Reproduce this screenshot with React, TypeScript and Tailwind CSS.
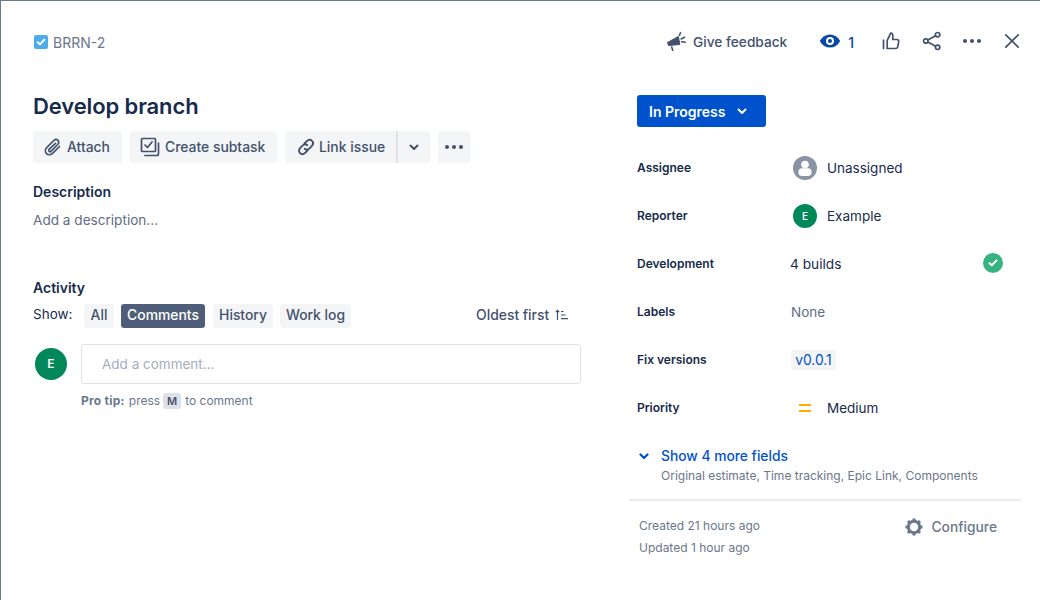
const F = { fontFamily: "Inter, 'Liberation Sans', sans-serif" };

function Check() {
  return (
    <svg width="16" height="16" viewBox="0 0 16 16" className="shrink-0">
      <rect x="1" y="1" width="14" height="14" rx="2" fill="#4bade8" />
      <path d="M4.7 8.2 7 10.4 11.3 5.8" fill="none" stroke="#fff" strokeWidth="2" strokeLinecap="round" strokeLinejoin="round" />
    </svg>
  );
}

function Megaphone() {
  return (
    <svg width="22" height="22" viewBox="0 0 22 22" className="shrink-0">
      <path d="M1.500 11.500 12.400 5.500 13.800 13.500 2.500 14.500Z" fill="#42526e" stroke="#42526e" strokeLinejoin="round" />
      <path d="M5.700 16l1 3.200M15.200 8l3.300-1.800M15.500 10.800l3.800.4M13.500 4.200l1-2.500" stroke="#42526e" strokeWidth="1.600" strokeLinecap="round" fill="none" />
    </svg>
  );
}

function Eye() {
  return (
    <svg width="22" height="16" viewBox="0 0 22 16" className="shrink-0">
      <path d="M0.800 8C3.200 3.600 6.800 1.400 11 1.400S18.800 3.600 21.200 8C18.800 12.400 15.200 14.600 11 14.600S3.200 12.400.8 8Z" fill="#0747a6" />
      <circle cx="11" cy="8" r="4" fill="#fff" />
      <circle cx="11" cy="8" r="2" fill="#0747a6" />
    </svg>
  );
}

function Thumb() {
  return (
    <svg width="18" height="18" viewBox="0 0 18 18" fill="none" stroke="#42526e" strokeWidth="1.700" strokeLinejoin="round" strokeLinecap="round" className="shrink-0">
      <path d="M1.500 8v8.500M5 16.500h8.500c1.200 0 2-.7 2.300-1.800l.9-5c.2-1.200-.6-2.200-1.800-2.200H10.800V3.200c0-1.300-.9-2.200-2-2.200L5.200 8.300V16.500Z" />
    </svg>
  );
}

function Share() {
  return (
    <svg width="20" height="20" viewBox="0 0 20 20" fill="none" stroke="#42526e" strokeWidth="1.700" className="shrink-0">
      <circle cx="3.800" cy="10" r="2.200" />
      <circle cx="15.600" cy="3.700" r="2.200" />
      <circle cx="15.600" cy="16.300" r="2.200" />
      <path d="M5.800 9 13.600 4.800M5.800 11 13.600 15.200" />
    </svg>
  );
}

function Dots({ w = 18 }: { w?: number }) {
  return (
    <svg width={w} height="4" viewBox="0 0 18 4" fill="#42526e" className="shrink-0">
      <circle cx="2" cy="2" r="2" />
      <circle cx="9" cy="2" r="2" />
      <circle cx="16" cy="2" r="2" />
    </svg>
  );
}

function Close() {
  return (
    <svg width="14" height="14" viewBox="0 0 14 14" stroke="#42526e" strokeWidth="1.700" strokeLinecap="round" className="shrink-0">
      <path d="M.8.8 13.200 13.200M13.200.8.800 13.200" />
    </svg>
  );
}

function Clip() {
  return (
    <svg width="20" height="20" viewBox="0 0 20 20" fill="none" stroke="#42526e" strokeWidth="1.700" strokeLinecap="round" className="shrink-0">
      <path d="M16.500 9.500 9.800 16.200c-2 2-4.700 2-6.300.4s-1.500-4.300.4-6.200l6.900-6.900c1.300-1.300 3.100-1.300 4.200-.2s1.100 2.900-.2 4.200l-6.600 6.600c-.7.700-1.600.7-2.100.2s-.5-1.400.2-2.100L12.500 6.300" />
    </svg>
  );
}

function Subtask() {
  return (
    <svg width="20" height="20" viewBox="0 0 20 20" fill="none" stroke="#42526e" strokeWidth="1.700" strokeLinecap="round" strokeLinejoin="round" className="shrink-0">
      <rect x="1.500" y="1.500" width="14" height="13" rx="1" />
      <path d="M5 8l2.500 2.500L12 5" />
      <path d="M18.500 6v10.500a2 2 0 0 1-2 2H5" />
    </svg>
  );
}

function LinkIcon() {
  return (
    <svg width="20" height="20" viewBox="0 0 20 20" fill="none" stroke="#42526e" strokeWidth="1.900" strokeLinecap="round" className="shrink-0">
      <path d="M8.500 6.500 10.800 4.200c1.600-1.600 3.800-1.700 5.200-.3s1.300 3.600-.3 5.200l-2.200 2.300c-1.500 1.500-3.500 1.600-4.800.4" />
      <path d="M11.500 13.500 9.200 15.800c-1.600 1.600-3.800 1.700-5.200.3s-1.300-3.600.3-5.200l2.200-2.300c1.500-1.500 3.500-1.600 4.800-.4" />
    </svg>
  );
}

function Chevron({ color = "#42526e", w = 2 }: { color?: string; w?: number }) {
  return (
    <svg width="10" height="7" viewBox="0 0 10 7" fill="none" stroke={color} strokeWidth={w} strokeLinecap="round" strokeLinejoin="round" className="shrink-0">
      <path d="M1.500 1.500 5 5 8.500 1.500" />
    </svg>
  );
}

function Sort() {
  return (
    <svg width="13" height="12" viewBox="0 0 13 12" fill="none" stroke="#42526e" strokeWidth="1.200" className="shrink-0">
      <path d="M2.500 11V1.500M.8 3.200 2.500 1.400 4.200 3.200M6 2.500h2.500M6 6h4.500M6 9.700h7" />
    </svg>
  );
}

function UserAvatar() {
  return (
    <svg width="24" height="24" viewBox="0 0 24 24" className="ml-[2px] shrink-0">
      <circle cx="12" cy="12" r="12" fill="#8993a4" />
      <circle cx="12" cy="8.500" r="3.800" fill="#fff" />
      <path d="M5.500 15.500c0-2 1.500-3.200 3.500-3.200h6c2 0 3.500 1.200 3.500 3.200V17c0 2-1.500 3-3.500 3H9c-2 0-3.500-1-3.500-3Z" fill="#fff" />
    </svg>
  );
}

function Gear() {
  return (
    <svg width="20" height="20" viewBox="0 0 20 20" fill="none" className="shrink-0">
      <circle cx="10" cy="10" r="5.700" stroke="#6b778c" strokeWidth="3" />
      <path d="M10 1.500v3M10 15.500v3M1.500 10h3M15.500 10h3M4 4l2.100 2.100M13.900 13.900 16 16M16 4l-2.100 2.100M6.100 13.900 4 16" stroke="#6b778c" strokeWidth="3" />
    </svg>
  );
}

function Row({ label, children }: { label: string; children: React.ReactNode }) {
  return (
    <div className="flex h-12 items-center">
      <div className="w-[154px] text-[12px] font-semibold text-[#172b4d]">{label}</div>
      <div className="flex min-w-0 flex-1 items-center text-[13.5px] leading-[20px] text-[#172b4d]">{children}</div>
    </div>
  );
}

function Btn({ children, className = "" }: { children: React.ReactNode; className?: string }) {
  return (
    <div className={`flex h-8 items-center rounded-[3px] bg-[#f4f5f7] text-[13.9px] font-medium text-[#42526e] ${className}`}>
      {children}
    </div>
  );
}

function Tab({ children, active, className = "" }: { children: React.ReactNode; active?: boolean; className?: string }) {
  return (
    <div className={`flex h-6 items-center justify-center rounded-[3px] pb-[1px] text-[13.9px] font-medium ${active ? "bg-[#505f79] text-white" : "bg-[#f4f5f7] text-[#42526e]"} ${className}`}>
      {children}
    </div>
  );
}

export default function App() {
  return (
    <div style={F} className="flex h-[600px] w-[1040px] overflow-hidden border-t border-l border-[#6b778c] bg-white">
      <div className="w-[628px] shrink-0 pl-8">
        <div className="mt-[32px] flex h-[18px] items-center gap-1 text-[14px] text-[#6b778c]">
          <Check />
          <span>BRRN-2</span>
        </div>
        <h1 className="mt-[38px] text-[22px] leading-[34px] font-semibold tracking-[-0.005em] text-[#172b4d]">Develop branch</h1>
        <div className="mt-[8px] flex gap-2">
          <Btn className="w-[89px] gap-[4px] pl-[10px]"><Clip /><span>Attach</span></Btn>
          <Btn className="w-[147px] gap-[5px] pl-[10px]"><Subtask /><span>Create subtask</span></Btn>
          <div className="flex">
            <Btn className="w-[113px] gap-[3px] rounded-r-none border-r-2 border-[#dfe1e6] pl-[11px]"><LinkIcon /><span>Link issue</span></Btn>
            <Btn className="w-[32px] justify-center rounded-l-none"><Chevron /></Btn>
          </div>
          <Btn className="w-[32px] justify-center"><Dots /></Btn>
        </div>
        <div className="mt-[20px] text-[14px] leading-[18px] font-semibold text-[#172b4d]">Description</div>
        <div className="mt-[10px] text-[13.6px] leading-[18px] text-[#5e6c84]">Add a description...</div>
        <div className="mt-[50px] text-[14px] leading-[18px] font-semibold text-[#172b4d]">Activity</div>
        <div className="mt-[7px] flex items-center">
          <span className="w-[51px] pb-[3px] text-[13.5px] text-[#172b4d]">Show:</span>
          <div className="flex">
            <Tab className="w-[30px]">All</Tab>
            <Tab active className="ml-[7px] w-[84px]">Comments</Tab>
            <Tab className="ml-[8px] w-[60px]">History</Tab>
            <Tab className="ml-[7px] w-[71px]">Work log</Tab>
          </div>
          <div className="ml-[125px] flex items-center gap-[6px] pb-[1px] text-[13.9px] font-medium text-[#42526e]">
            <span>Oldest first</span>
            <Sort />
          </div>
        </div>
        <div className="mt-[16px] flex gap-[14px] pl-[2px]">
          <div className="mt-[4px] flex h-8 w-8 items-center justify-center rounded-full bg-[#00875a] text-[12px] font-semibold text-white">E</div>
          <div className="flex h-10 w-[500px] items-center rounded-[3px] border border-[#dfe1e6] pt-[1px] pl-[20px] text-[13.5px] text-[#a5adba]">
            Add a comment...
          </div>
        </div>
        <div className="mt-[8px] flex h-[18px] items-center pl-[48px] text-[12px] text-[#6b778c]">
          <span className="font-bold tracking-[0.25px]">Pro tip:</span>
          <span className="ml-1">press</span>
          <span className="mr-[4px] ml-[3px] flex h-4 w-[18px] items-center justify-center rounded-[3px] bg-[#dfe1e6] text-[11px] font-semibold text-[#42526e]">M</span>
          <span>to comment</span>
        </div>
      </div>

      <div className="w-[392px] shrink-0">
        <div className="mt-[30px] flex h-[22px] items-center pl-[37px] text-[#42526e]">
          <Megaphone />
          <span className="ml-[5px] text-[13.7px] font-medium">Give feedback</span>
          <span className="ml-[32px] -translate-y-[1px]"><Eye /></span>
          <span className="ml-[7px] text-[14px] font-medium text-[#0747a6]">1</span>
          <span className="ml-[28px] -translate-y-[1px]"><Thumb /></span>
          <span className="ml-[22px] -translate-y-[1px]"><Share /></span>
          <span className="ml-[21px] -translate-y-[1px]"><Dots /></span>
          <span className="ml-[24px] -translate-y-[1px]"><Close /></span>
        </div>
        <div className="px-2">
          <div className="mt-[42px] flex h-8 w-[129px] items-center gap-[12px] rounded-[3px] bg-[#0052cc] pl-3 text-[14px] font-semibold text-white">
            <span>In Progress</span>
            <Chevron color="#fff" />
          </div>
          <div className="mt-[17px]">
            <Row label="Assignee">
              <UserAvatar />
              <span className="ml-[10px]">Unassigned</span>
            </Row>
            <Row label="Reporter">
              <div className="ml-[2px] flex h-6 w-6 items-center justify-center rounded-full bg-[#00875a] text-[10px] font-semibold text-white">E</div>
              <span className="ml-[10px]">Example</span>
            </Row>
            <Row label="Development">
              <span className="-ml-[1px] text-[13.7px]">4 builds</span>
              <span className="mr-[10px] ml-auto flex h-5 w-5 -translate-y-[1px] items-center justify-center rounded-full bg-[#36b37e]">
                <svg width="10" height="8" viewBox="0 0 10 8" fill="none" stroke="#fff" strokeWidth="2" strokeLinecap="round" strokeLinejoin="round">
                  <path d="M1.500 4.200 3.800 6.300 8.500 1.500" />
                </svg>
              </span>
            </Row>
            <Row label="Labels">
              <span className="text-[#5e6c84]">None</span>
            </Row>
            <Row label="Fix versions">
              <span className="flex h-5 w-[45px] items-center justify-center rounded-[3px] bg-[#f4f5f7] text-[13.8px] text-[#0052cc]">v0.0.1</span>
            </Row>
            <Row label="Priority">
              <span className="ml-[8px] flex h-[8px] w-3 flex-col justify-between">
                <span className="h-[2px] bg-[#ffab00]" />
                <span className="h-[2px] bg-[#ffab00]" />
              </span>
              <span className="ml-[16px]">Medium</span>
            </Row>
          </div>
          <div className="mt-[15px] flex items-center gap-[12px] pl-[2px] text-[13.8px] leading-[18px] font-medium text-[#0052cc]">
            <Chevron color="#0052cc" w={2.200} />
            <span>Show 4 more fields</span>
          </div>
          <div className="mt-[2px] pl-[24px] text-[12px] leading-[18px] text-[#6b778c]">Original estimate, Time tracking, Epic Link, Components</div>
        </div>
        <div className="mt-[14px] h-[2px] bg-[#ebecf0]" />
        <div className="flex items-start justify-between pt-[14px] pr-6 pl-[10px] text-[12px] text-[#6b778c]">
          <div>
            <div className="leading-[22px]">Created 21 hours ago</div>
            <div className="leading-[22px]">Updated 1 hour ago</div>
          </div>
          <div className="flex items-center gap-[7px] pt-[2px] text-[13.8px] font-medium">
            <Gear />
            <span>Configure</span>
          </div>
        </div>
      </div>
    </div>
  );
}
